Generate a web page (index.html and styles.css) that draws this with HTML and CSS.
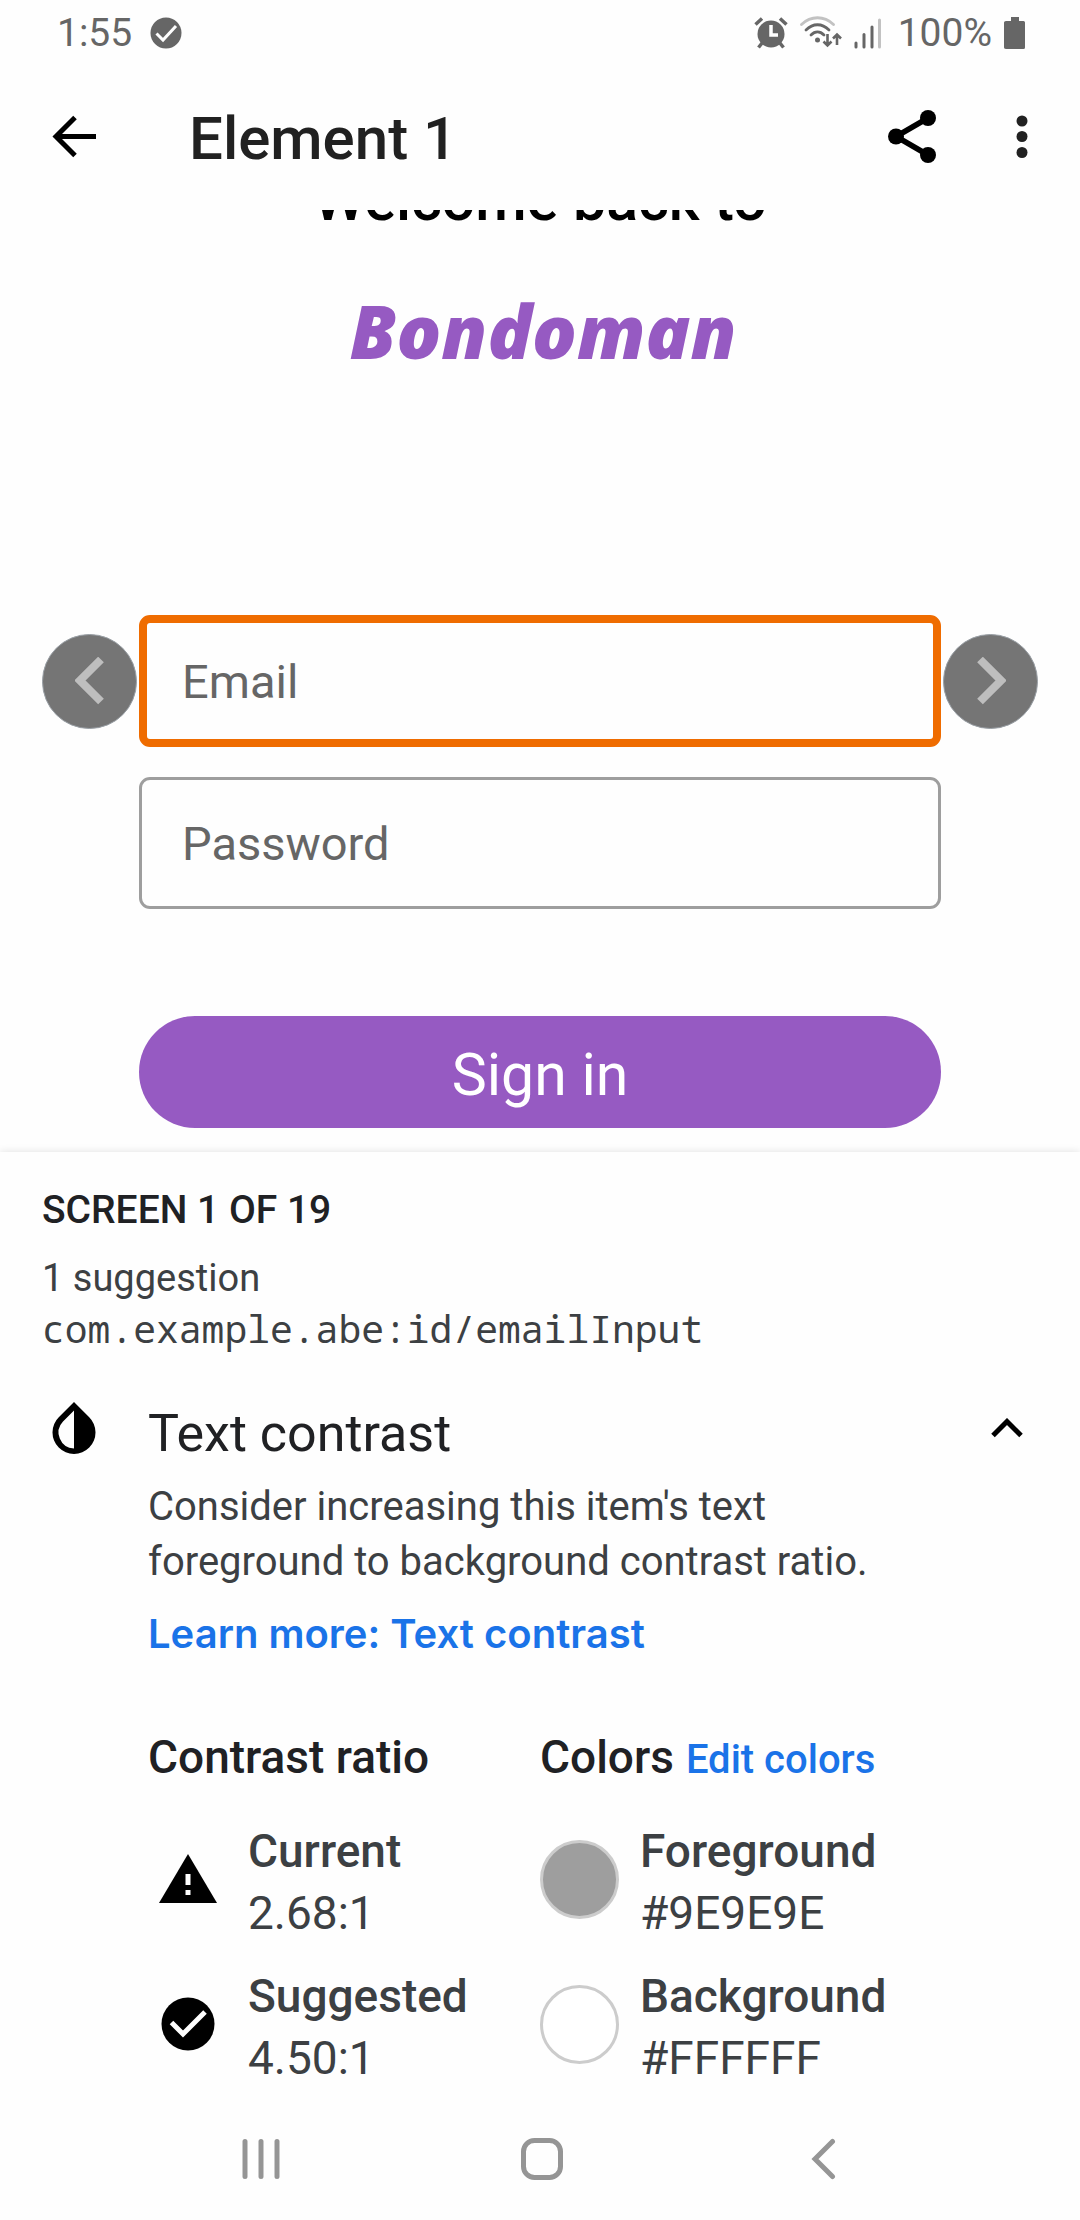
FILE: index.html
```html
<!DOCTYPE html>
<html lang="en">
<head>
<meta charset="utf-8">
<meta name="viewport" content="width=device-width, initial-scale=1">
<title>Element 1</title>
<link rel="stylesheet" href="styles.css">
</head>
<body>
<div class="status-bar">
  <div class="status-group">
    <span>1:55</span>
    <svg class="status-check" width="32" height="32" viewBox="0 0 32 32" aria-hidden="true"><circle cx="16" cy="16" r="15.5" fill="#666"/><path d="M6.500 16.500l6.500 6.500L26 9" fill="none" stroke="#fefefe" stroke-width="3"/></svg>
  </div>
  <div class="status-group status-right">
    <svg width="34" height="34" viewBox="0 0 34 34" aria-hidden="true"><circle cx="17" cy="18" r="13.500" fill="#666"/><path d="M1.500 8.500l6.500-6M32.500 8.500l-6.500-6M4.500 31.500l4-5M29.500 31.500l-4-5" stroke="#666" stroke-width="3.500"/><path d="M17 9v10h7" fill="none" stroke="#fefefe" stroke-width="3.500"/></svg>
    <svg class="status-wifi" width="42" height="34" viewBox="0 0 42 34" aria-hidden="true"><g fill="none" stroke-linecap="round" stroke-width="2.800"><path d="M1.500 8.500C11-.5 24-.5 33.500 8.500" stroke="#c2c2c2"/><path d="M6 14C13 7 22 7 29 14M11 19C15 15 20 15 24 19" stroke="#666"/></g><circle cx="17.500" cy="24" r="2.500" fill="#666"/><path d="M27.500 18v11M23.500 25.500l4 4 4-4M37 29V19M33 22.500l4-4 4 4" fill="none" stroke="#666" stroke-width="2.600"/></svg>
    <svg class="status-signal" width="28" height="34" viewBox="0 0 28 34" aria-hidden="true"><g stroke-width="3" stroke-linecap="round"><path d="M2 27v4M10 18.500V31M18 11v20" stroke="#666"/><path d="M25.500 4v27" stroke="#c2c2c2"/></g></svg>
    <span>100%</span>
    <svg width="22" height="34" viewBox="0 0 22 34" aria-hidden="true"><path d="M7 1h8v4h4.500Q21 5 21 6.500v25Q21 33 19.500 33h-17Q0 33 0 31.500v-25Q0 5 2 5h5z" fill="#666"/></svg>
  </div>
</div>

<header class="app-bar">
  <button class="icon-button" type="button" aria-label="Back">
    <svg width="44" height="48" viewBox="0 0 44 48"><path d="M23 3.500L4 22.500l19 19M4 22.500h40" fill="none" stroke="#000" stroke-width="5"/></svg>
  </button>
  <h1 class="app-title">Element 1</h1>
  <button class="icon-button" type="button" aria-label="Share">
    <svg width="48" height="56" viewBox="0 0 48 56"><path d="M40 8L8 26.500 40 45" fill="none" stroke="#000" stroke-width="5.500"/><circle cx="40" cy="8" r="8"/><circle cx="8" cy="26.500" r="8"/><circle cx="40" cy="45" r="8"/></svg>
  </button>
  <button class="icon-button" type="button" aria-label="More options">
    <svg width="12" height="48" viewBox="0 0 12 48"><g fill="#212121"><circle cx="6" cy="7" r="5.500"/><circle cx="6" cy="22.500" r="5.500"/><circle cx="6" cy="38.500" r="5.500"/></g></svg>
  </button>
</header>

<main>
  <section class="preview" aria-label="Screen preview">
    <p class="welcome">Welcome back to</p>
    <p class="logo">Bondoman</p>
    <div class="preview-form">
      <button class="step-button" type="button" aria-label="Previous element">
        <svg width="30" height="48" viewBox="0 0 30 48"><path d="M26 2.500L5 23.500l21 21" fill="none" stroke="#bebebe" stroke-width="8"/></svg>
      </button>
      <input class="field field-selected" type="email" placeholder="Email" aria-label="Email">
      <button class="step-button" type="button" aria-label="Next element">
        <svg width="30" height="48" viewBox="0 0 30 48"><path d="M4 2.500l21 21-21 21" fill="none" stroke="#bebebe" stroke-width="8"/></svg>
      </button>
      <input class="field field-password" type="password" placeholder="Password" aria-label="Password">
      <button class="sign-in" type="button">Sign in</button>
    </div>
  </section>

  <section class="sheet">
    <h2 class="screen-count">SCREEN 1 OF 19</h2>
    <p class="summary">1 suggestion</p>
    <p class="summary resource-id">com.example.abe:id/emailInput</p>

    <div class="issue-header">
      <svg class="issue-icon" width="44" height="52" viewBox="0 0 44 52" aria-hidden="true"><path d="M22 0L37 15A21.500 21.500 0 1 1 7 15z"/><path d="M22 8.500L11 19.500A16 16 0 0 0 22 46.500z" fill="#fefefe"/></svg>
      <h3 class="issue-title">Text contrast</h3>
      <button class="icon-button collapse" type="button" aria-label="Collapse">
        <svg width="32" height="20" viewBox="0 0 32 20"><path d="M2 17.500L16 3.500l14 14" fill="none" stroke="#000" stroke-width="5"/></svg>
      </button>
    </div>

    <div class="issue-body">
      <p class="issue-text">Consider increasing this item's text foreground to background contrast ratio.</p>
      <a class="link learn-more" href="#">Learn more: Text contrast</a>

      <div class="details">
        <section>
          <h4 class="detail-title">Contrast ratio</h4>
          <div class="detail">
            <svg class="detail-icon" width="58" height="50" viewBox="0 0 58 50" aria-hidden="true"><path d="M29 0l29 49H0z"/><path d="M26.500 20h5v11h-5zM26.500 36h5v5h-5z" fill="#fefefe"/></svg>
            <dl class="pair"><dt>Current</dt><dd>2.68:1</dd></dl>
          </div>
          <div class="detail">
            <svg class="detail-icon" width="54" height="54" viewBox="0 0 54 54" aria-hidden="true"><circle cx="27" cy="27" r="26.500"/><path d="M10.500 25.500l11.500 11.500L44 15" fill="none" stroke="#fefefe" stroke-width="5"/></svg>
            <dl class="pair"><dt>Suggested</dt><dd>4.50:1</dd></dl>
          </div>
        </section>
        <section>
          <div class="detail-heading">
            <h4 class="detail-title">Colors</h4>
            <a class="link" href="#">Edit colors</a>
          </div>
          <div class="detail">
            <span class="swatch swatch-foreground"></span>
            <dl class="pair"><dt>Foreground</dt><dd>#9E9E9E</dd></dl>
          </div>
          <div class="detail">
            <span class="swatch"></span>
            <dl class="pair"><dt>Background</dt><dd>#FFFFFF</dd></dl>
          </div>
        </section>
      </div>
    </div>
  </section>
</main>

<nav class="system-nav" aria-label="System">
  <button class="icon-button" type="button" aria-label="Recent apps">
    <svg width="40" height="42" viewBox="0 0 40 42"><path d="M4 3.500v35M20 3.500v35M36 3.500v35" stroke="#959595" stroke-width="5" stroke-linecap="round"/></svg>
  </button>
  <button class="icon-button" type="button" aria-label="Home">
    <svg width="42" height="42" viewBox="0 0 42 42"><rect x="2.500" y="2.500" width="37" height="37" rx="11" fill="none" stroke="#959595" stroke-width="5"/></svg>
  </button>
  <button class="icon-button" type="button" aria-label="Back">
    <svg width="40" height="42" viewBox="0 0 40 42"><path d="M29.500 3.500L12 21l17.500 17.500" fill="none" stroke="#959595" stroke-width="5" stroke-linecap="round"/></svg>
  </button>
</nav>
</body>
</html>
```
FILE: styles.css
```css
* {
  box-sizing: border-box;
}

body {
  margin: 0;
  background: #fefefe;
  color: #202124;
  font-family: Roboto, "Liberation Sans", sans-serif;
}

h1, h2, h3, h4, p, dl, dd {
  margin: 0;
}

svg {
  display: block;
  flex: none;
}

button {
  padding: 0;
  border: 0;
  background: none;
  font: inherit;
}

.icon-button {
  display: grid;
  place-items: center;
  flex: none;
}

/* Status bar */

.status-bar {
  display: flex;
  justify-content: space-between;
  height: 66px;
  padding: 0 54px 0 57px;
  color: #666;
  font-size: 39px;
}

.status-group {
  display: flex;
  align-items: center;
  gap: 18px;
}

.status-right {
  gap: 12px;
}

.status-signal {
  margin-right: 4px;
}

/* App bar */

.app-bar {
  display: flex;
  align-items: center;
  height: 144px;
  padding: 0 52px;
  gap: 80px;
}

.app-title {
  flex: 1;
  margin-left: 13px;
  color: #212121;
  font-size: 60px;
  font-weight: 500;
}

/* Inspected screen */

.preview {
  overflow: hidden;
  padding-bottom: 24px;
  text-align: center;
}

.welcome {
  margin-top: -40px;
  color: #000;
  font-size: 59px;
  font-weight: 500;
  line-height: 60px;
}

.logo {
  margin-top: 56px;
  padding-left: 6px;
  color: #965ac2;
  font-family: "Open Sans", Lato, sans-serif;
  font-size: 74px;
  font-style: italic;
  font-weight: 800;
  line-height: 90px;
}

.preview-form {
  display: grid;
  grid-template-columns: 95px minmax(0, 1fr) 95px;
  align-items: center;
  column-gap: 2px;
  row-gap: 30px;
  margin-top: 239px;
  padding: 0 42px;
}

.step-button {
  display: grid;
  place-items: center;
  height: 95px;
  border: 1px solid #9aa0a6;
  border-radius: 50%;
  background: #757575;
}

.field {
  width: 100%;
  height: 132px;
  padding: 0 40px;
  border: 3px solid #9e9e9e;
  border-radius: 11px;
  background: #fefefe;
  color: #666;
  font: 47px Roboto, "Liberation Sans", sans-serif;
}

.field::placeholder {
  color: #666;
  opacity: 1;
}

.field-selected {
  padding: 0 35px;
  border: 8px solid #ef6c00;
}

.field-password,
.sign-in {
  grid-column: 2;
}

.sign-in {
  height: 112px;
  margin-top: 77px;
  padding-top: 4px;
  border-radius: 56px;
  background: #965ac2;
  color: #fff;
  font-size: 59px;
}

/* Results sheet */

.sheet {
  position: relative;
  padding: 34px 42px 6px;
  background: #fefefe;
  box-shadow: 0 0 8px rgba(0, 0, 0, 0.12);
}

.screen-count {
  font-size: 39px;
  font-weight: 500;
  line-height: 48px;
}

.summary {
  color: #3c4043;
  font-size: 38px;
  line-height: 52px;
}

.screen-count + .summary {
  margin-top: 18px;
}

.resource-id {
  font-family: "Noto Sans Mono", "DejaVu Sans Mono", monospace;
  line-height: 48px;
}

.issue-header {
  display: flex;
  align-items: center;
  margin-top: 50px;
  padding: 0 15px 0 10px;
}

.issue-icon,
.collapse {
  margin-bottom: 12px;
}

.issue-title {
  flex: 1;
  margin-left: 52px;
  font-size: 52px;
  font-weight: 400;
  line-height: 60px;
}

.issue-body {
  margin-top: 13px;
  padding: 0 106px;
}

.issue-text {
  color: #3c4043;
  font-size: 40px;
  line-height: 55px;
}

.link {
  color: #1a73e8;
  font-size: 40px;
  font-weight: 500;
  line-height: 48px;
  text-decoration: none;
}

.learn-more {
  display: block;
  margin-top: 21px;
  font-family: Inter, Roboto, sans-serif;
  font-weight: 600;
}

.details {
  display: grid;
  grid-template-columns: 1fr 1fr;
  margin-top: 69px;
}

.detail-heading {
  display: flex;
  align-items: baseline;
  gap: 12px;
}

.detail-title {
  margin-bottom: 33px;
  font-size: 46px;
  font-weight: 500;
  line-height: 60px;
}

.detail {
  display: grid;
  grid-template-columns: 79px 1fr;
  align-items: center;
  column-gap: 21px;
}

.detail + .detail {
  margin-top: 21px;
}

.detail-icon,
.swatch {
  margin-bottom: 6px;
}

.detail-icon {
  justify-self: center;
}

.swatch {
  height: 79px;
  border: 3px solid #ccc;
  border-radius: 50%;
  background: #fff;
}

.swatch-foreground {
  background: #9e9e9e;
}

.pair {
  color: #3c4043;
  font-size: 46px;
  line-height: 62px;
}

.pair dt {
  font-weight: 500;
}

/* System navigation */

.system-nav {
  position: relative;
  display: grid;
  grid-template-columns: repeat(3, 281px);
  justify-content: center;
  align-items: center;
  height: 127px;
  padding-left: 4px;
  background: #fefefe;
}
```
